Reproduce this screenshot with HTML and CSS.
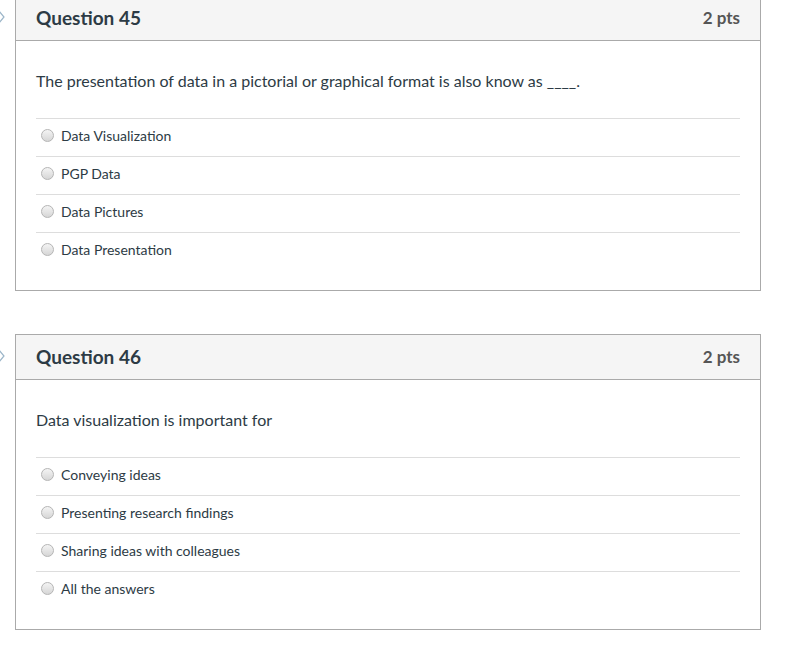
FILE: index.html
```html
<!DOCTYPE html>
<html lang="en">
<head>
    <meta charset="UTF-8">
    <meta name="viewport" content="width=device-width, initial-scale=1.0">
    <title>Quiz</title>
    <link rel="stylesheet" href="styles.css">
</head>
<body>
    <main class="quiz">
        <!-- Question 45 -->
        <div class="question-row">
            <span class="flag">
                <svg width="8" height="14" viewBox="0 0 8 14"><path d="M1 1 L6 7 L1 13" fill="none" stroke="#9bb5c8" stroke-width="1.2"/></svg>
            </span>
            <section class="question">
                <div class="question-header">
                    <h2>Question 45</h2>
                    <span class="points">2 pts</span>
                </div>
                <div class="question-body">
                    <p class="question-text">The presentation of data in a pictorial or graphical format is also know as ____.</p>
                    <ul class="answers">
                        <li><span class="radio"></span>Data Visualization</li>
                        <li><span class="radio"></span>PGP Data</li>
                        <li><span class="radio"></span>Data Pictures</li>
                        <li><span class="radio"></span>Data Presentation</li>
                    </ul>
                </div>
            </section>
        </div>

        <!-- Question 46 -->
        <div class="question-row">
            <span class="flag">
                <svg width="8" height="14" viewBox="0 0 8 14"><path d="M1 1 L6 7 L1 13" fill="none" stroke="#9bb5c8" stroke-width="1.2"/></svg>
            </span>
            <section class="question">
                <div class="question-header">
                    <h2>Question 46</h2>
                    <span class="points">2 pts</span>
                </div>
                <div class="question-body">
                    <p class="question-text">Data visualization is important for</p>
                    <ul class="answers">
                        <li><span class="radio"></span>Conveying ideas</li>
                        <li><span class="radio"></span>Presenting research findings</li>
                        <li><span class="radio"></span>Sharing ideas with colleagues</li>
                        <li><span class="radio"></span>All the answers</li>
                    </ul>
                </div>
            </section>
        </div>
    </main>
</body>
</html>
```

FILE: styles.css
```css
/* Page */
body {
    margin: 0;
    background-color: #fff;
    font-family: Lato, "Open Sans", sans-serif;
    color: #2d3b45;
}

.quiz {
    margin-top: -5px;
    display: flex;
    flex-direction: column;
    gap: 43px;
}

/* One question with its flag arrow */
.question-row {
    display: flex;
    align-items: flex-start;
}

.flag {
    width: 15px;
    height: 44px;
    display: flex;
    align-items: center;
    margin-left: -2px;
    margin-right: 2px;
}

.question {
    width: 744px;
    border: 1px solid #aaa;
    background-color: #fff;
}

/* Header strip */
.question-header {
    height: 45px;
    display: flex;
    align-items: center;
    justify-content: space-between;
    padding: 0 20px 2px 20px;
    box-sizing: border-box;
    background-color: #f5f5f5;
    border-bottom: 1px solid #aaa;
}

.question-header h2 {
    margin: 0;
    font-size: 19px;
    font-weight: bold;
    color: #2d3b45;
}

.points {
    font-size: 17px;
    font-weight: bold;
    color: #555;
}

/* Body */
.question-body {
    padding: 30px 20px 20px 20px;
}

.question-text {
    margin: 0 0 27px 0;
    font-size: 16px;
    line-height: 20px;
}

.answers {
    list-style: none;
    margin: 0;
    padding: 0;
}

.answers li {
    height: 38px;
    box-sizing: border-box;
    display: flex;
    align-items: center;
    border-top: 1px solid #ddd;
    font-size: 14px;
    padding: 0 0 5px 5px;
}

.radio {
    width: 11px;
    height: 11px;
    border-radius: 50%;
    border: 1px solid #b5b5b5;
    background: linear-gradient(#f4f4f4, #d6d6d6);
    margin-right: 7px;
}
```
